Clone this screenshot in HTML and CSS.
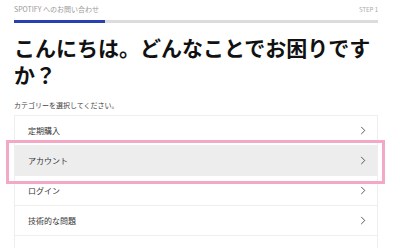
FILE: index.html
```html
<!DOCTYPE html>
<html lang="ja">
<head>
<meta charset="utf-8">
<link rel="stylesheet" href="styles.css">
</head>
<body>
<div class="page">
  <div class="top">
    <span class="brand">SPOTIFY へのお問い合わせ</span>
    <span class="step">STEP 1</span>
  </div>
  <div class="progress"><div class="fill" style="width:25%"></div></div>
  <h1 class="title">こんにちは。どんなことでお困りですか？</h1>
  <p class="hint">カテゴリーを選択してください。</p>
  <ul class="list">
    <li class="row"><span>定期購入</span><svg class="chev" viewBox="0 0 6 10"><polyline points="1,1 5,5 1,9"/></svg></li>
    <li class="row active"><span>アカウント</span><svg class="chev" viewBox="0 0 6 10"><polyline points="1,1 5,5 1,9"/></svg></li>
    <li class="row"><span>ログイン</span><svg class="chev" viewBox="0 0 6 10"><polyline points="1,1 5,5 1,9"/></svg></li>
    <li class="row"><span>技術的な問題</span><svg class="chev" viewBox="0 0 6 10"><polyline points="1,1 5,5 1,9"/></svg></li>
    <li class="row last"><span></span></li>
  </ul>
  <div class="highlight"></div>
</div>
</body>
</html>
```

FILE: styles.css
```css
html, body {
  margin: 0;
  padding: 0;
  background: #fff;
}
body {
  font-family: "Noto Sans CJK JP", "Noto Sans", sans-serif;
  color: #222;
}
.page {
  position: relative;
  width: 364px;
  height: 248px;
  overflow: hidden;
  padding: 4px 22px 0 14px;
}
.top {
  display: flex;
  justify-content: space-between;
  align-items: center;
  height: 10px;
  font-size: 7px;
  color: #999;
}
.step {
  font-size: 6px;
  color: #aaa;
}
.progress {
  margin-top: 6px;
  height: 3px;
  background: #dcdcdc;
}
.fill {
  height: 100%;
  background: #2a3fb0;
}
.title {
  margin: 11px 0 0;
  font-size: 21px;
  line-height: 27px;
  font-weight: 700;
  color: #111;
}
.hint {
  margin: 12px 0 0;
  font-size: 7px;
  line-height: 10px;
  color: #444;
}
.list {
  list-style: none;
  margin: 5px 0 0;
  padding: 0;
  border-left: 1px solid #eee;
  border-right: 1px solid #eee;
}
.row {
  display: flex;
  justify-content: space-between;
  align-items: center;
  height: 30px;
  padding: 0 11px 0 13px;
  border-top: 1px solid #eee;
  box-sizing: border-box;
  font-size: 8px;
  color: #333;
}
.row.active {
  background: #ededed;
}
.chev {
  width: 6px;
  height: 9px;
  fill: none;
  stroke: #333;
  stroke-width: 0.9;
}
.highlight {
  position: absolute;
  left: 6px;
  top: 140px;
  width: 373px;
  height: 38px;
  border: 3px solid #f3a8c5;
}
```
